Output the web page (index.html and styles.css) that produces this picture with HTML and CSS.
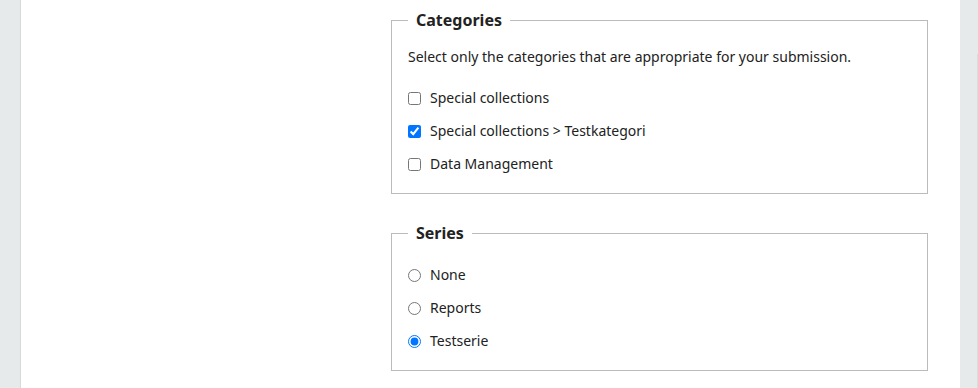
FILE: index.html
```html
<!DOCTYPE html>
<html lang="en">
<head>
  <meta charset="UTF-8">
  <meta name="viewport" content="width=device-width, initial-scale=1.0">
  <title>Submission metadata</title>
  <link rel="stylesheet" href="styles.css">
</head>
<body>
  <div class="page">
    <div class="page-side page-side-left"></div>

    <main class="page-main">
      <form class="submission-form">
        <div class="form-spacer"></div>

        <div class="form-fields">
          <fieldset class="field-group field-group-categories">
            <legend class="field-legend">Categories</legend>
            <p class="field-description">Select only the categories that are appropriate for your submission.</p>
            <ul class="option-list">
              <li class="option">
                <label class="option-label"><input type="checkbox" name="categories[]" value="1"> Special collections</label>
              </li>
              <li class="option">
                <label class="option-label"><input type="checkbox" name="categories[]" value="2" checked> Special collections &gt; Testkategori</label>
              </li>
              <li class="option">
                <label class="option-label"><input type="checkbox" name="categories[]" value="3"> Data Management</label>
              </li>
            </ul>
          </fieldset>

          <fieldset class="field-group field-group-series">
            <legend class="field-legend">Series</legend>
            <ul class="option-list">
              <li class="option">
                <label class="option-label"><input type="radio" name="series" value=""> None</label>
              </li>
              <li class="option">
                <label class="option-label"><input type="radio" name="series" value="1"> Reports</label>
              </li>
              <li class="option">
                <label class="option-label"><input type="radio" name="series" value="2" checked> Testserie</label>
              </li>
            </ul>
          </fieldset>
        </div>
      </form>
    </main>

    <div class="page-side page-side-right">
      <div class="scroll-edge"></div>
    </div>
  </div>
</body>
</html>
```

FILE: styles.css
```css
html,
body {
  height: 100%;
}

body {
  font-family: "Noto Sans", "Open Sans", sans-serif;
  font-size: 14px;
  margin: 0;
  padding: 0;
  background-color: #e6eaea;
  color: #222222;
  overflow: hidden;
}

.page {
  display: flex;
  height: 100%;
}

.page-side {
  background-color: #e6eaea;
}

.page-side-left {
  width: 20px;
  border-right: 1px solid #d6dada;
}

.page-side-right {
  width: 18px;
  display: flex;
  justify-content: flex-end;
  padding-top: 54px;
  box-sizing: border-box;
}

.scroll-edge {
  width: 1px;
  background-color: #d8dcdc;
}

.page-main {
  flex: 1;
  background-color: #ffffff;
  padding: 9px 32px 0 0;
}

.submission-form {
  display: flex;
}

.form-spacer {
  width: 370px;
  flex-shrink: 0;
}

.form-fields {
  flex: 1;
}

.field-group {
  margin: 0 0 28px 0;
  padding: 16px 16px 19px 16px;
  border: 1px solid #bbbbbb;
}

.field-group-series {
  padding-top: 17px;
  padding-bottom: 19px;
}

.field-legend {
  font-size: 16px;
  font-weight: 700;
  line-height: 22px;
  padding: 0 8px;
}

.field-description {
  margin: 0 0 21px 0;
  line-height: 20px;
}

.option-list {
  list-style: none;
  margin: 4px 0 0 0;
  padding: 0;
}

.option + .option {
  margin-top: 13px;
}

.option-label {
  display: flex;
  align-items: center;
  gap: 9px;
  line-height: 20px;
}

.option-label input {
  margin: 0;
  width: 13px;
  height: 13px;
}
```
